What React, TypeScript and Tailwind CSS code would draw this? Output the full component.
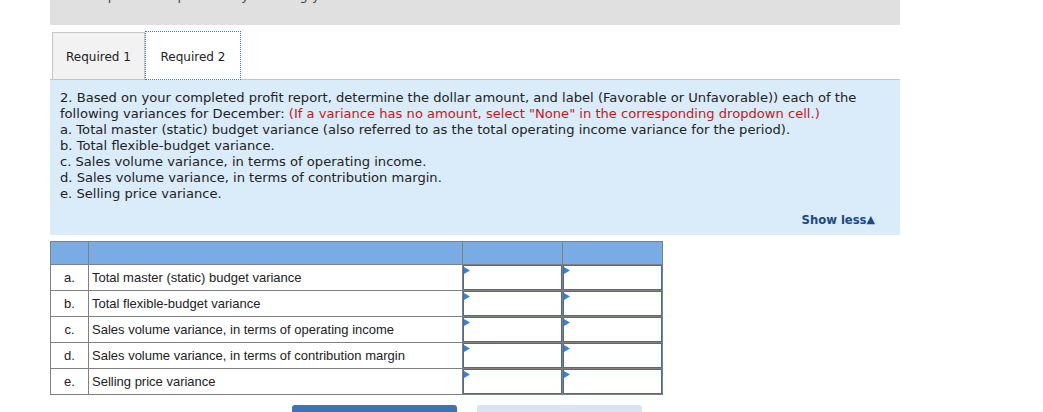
import React from "react";

const rows = [
  { k: "a.", t: "Total master (static) budget variance" },
  { k: "b.", t: "Total flexible-budget variance" },
  { k: "c.", t: "Sales volume variance, in terms of operating income" },
  { k: "d.", t: "Sales volume variance, in terms of contribution margin" },
  { k: "e.", t: "Selling price variance" },
];

function InputCell() {
  return (
    <div className="w-[100px] h-full border-r border-[#808080] bg-white">
      <div className="relative w-full h-full border border-[#4a6c98] bg-white">
        <svg className="absolute left-0 top-[1px]" width="7" height="8" viewBox="0 0 7 8">
          <polygon points="0,0 6,3.5 0,7" fill="#3b80d4" />
        </svg>
      </div>
    </div>
  );
}

export default function App() {
  return (
    <div className="w-[1043px] h-[412px] overflow-hidden bg-white font-['DejaVu_Sans',Verdana,sans-serif]">
      <div className="ml-[50px] w-[850px]">
        <div className="h-[25px] bg-[#e0e0e0] overflow-hidden">
          <p className="-mt-[12px] pl-[28px] text-[13px] leading-[16px] text-[#444]">
            Complete this question by entering your answers in the tabs below.
          </p>
        </div>
        <div className="flex items-end h-[55px] border-b border-[#c4c4c4] pl-[2px]">
          <div className="w-[93px] h-[47px] pt-[2px] bg-[#f2f2f2] border border-b-0 border-[#c6c6c6] flex items-center justify-center text-[12px] text-[#222]">
            Required 1
          </div>
          <div className="relative w-[96px] h-[49px] pt-[2px] -mb-px bg-white border border-dotted border-[#3b7bc8] flex items-center justify-center text-[12px] text-[#222]">
            Required 2
          </div>
        </div>
        <div className="bg-[#daebf9] pt-[10px] pl-[10px] pr-[25px] pb-[7px] text-[13.1px] leading-[16px] text-[#222]">
          <p>
            2. Based on your completed profit report, determine the dollar amount, and label (Favorable or Unfavorable)) each of the
            following variances for December:{" "}
            <span className="text-[#c8161d]">
              (If a variance has no amount, select "None" in the corresponding dropdown cell.)
            </span>
          </p>
          <p>a. Total master (static) budget variance (also referred to as the total operating income variance for the period).</p>
          <p>b. Total flexible-budget variance.</p>
          <p>c. Sales volume variance, in terms of operating income.</p>
          <p>d. Sales volume variance, in terms of contribution margin.</p>
          <p>e. Selling price variance.</p>
          <div className="mt-[10px] h-[16px] flex items-center justify-end text-[11.6px] leading-[16px] font-bold text-[#1d4a87]">
            <span>Show less</span>
            <span className="text-[11px] leading-[16px]">▲</span>
          </div>
        </div>

        <div className="mt-[6px] w-[613px] border-l border-t border-[#808080] font-['Liberation_Sans',Arial,sans-serif] text-[13px] text-[#222]">
          <div className="flex h-[23px] bg-[#79ace5] border-b border-[#808080]">
            <div className="w-[38px] border-r border-[#808080]" />
            <div className="w-[374px] border-r border-[#808080]" />
            <div className="w-[100px] border-r border-[#808080]" />
            <div className="w-[100px] border-r border-[#808080]" />
          </div>
          {rows.map((r) => (
            <div key={r.k} className="flex h-[26px] border-b border-[#808080]">
              <div className="w-[38px] border-r border-[#808080] flex items-center justify-center">{r.k}</div>
              <div className="w-[374px] border-r border-[#808080] flex items-center pl-[3px]">{r.t}</div>
              <InputCell />
              <InputCell />
            </div>
          ))}
        </div>

        <div className="mt-[10px] flex gap-[20px] pl-[242px]">
          <div className="w-[165px] h-[30px] rounded-t-[3px] bg-[#3b73b6]" />
          <div className="w-[165px] h-[30px] rounded-t-[3px] bg-[#d8e4f1]" />
        </div>
      </div>
    </div>
  );
}
